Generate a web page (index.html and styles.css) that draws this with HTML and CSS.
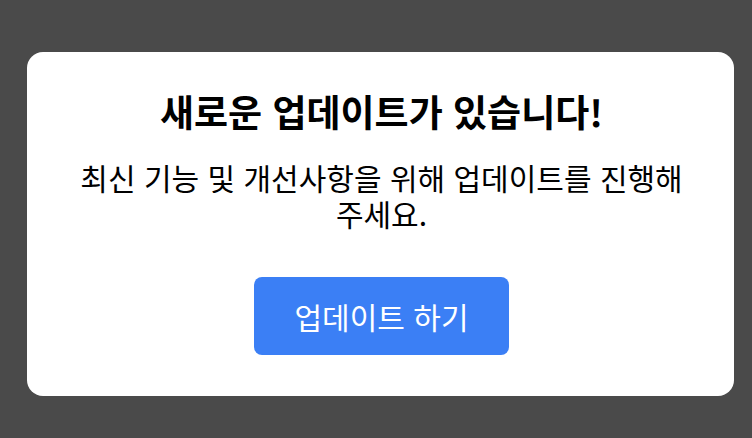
FILE: index.html
```html
<!DOCTYPE html>
<html lang="ko">
<head>
    <meta charset="UTF-8">
    <meta name="viewport" content="width=device-width, initial-scale=1.0">
    <title>업데이트 안내</title>
    <link rel="stylesheet" href="styles.css">
</head>
<body>
    <div class="overlay">
        <div class="dialog">
            <h1 class="dialog-title">새로운 업데이트가 있습니다!</h1>
            <p class="dialog-text">최신 기능 및 개선사항을 위해 업데이트를 진행해 주세요.</p>
            <button class="update-button">업데이트 하기</button>
        </div>
    </div>
</body>
</html>
```

FILE: styles.css
```css
html, body {
    margin: 0;
    padding: 0;
    height: 100%;
}
body {
    background-color: #4a4a4a;
    font-family: "Noto Sans CJK KR", "Noto Sans", sans-serif;
    color: #000;
}
.overlay {
    padding: 52px 18px 0 27px;
}
.dialog {
    background-color: #fff;
    border-radius: 16px;
    height: 344px;
    box-sizing: border-box;
    padding: 34px 38px 0 40px;
    display: flex;
    flex-direction: column;
    align-items: center;
    text-align: center;
}
.dialog-title {
    margin: 0;
    font-size: 37px;
    font-weight: 700;
    line-height: 50px;
}
.dialog-text {
    margin: 23px 0 0;
    max-width: 630px;
    font-size: 30px;
    line-height: 36px;
    word-break: keep-all;
}
.update-button {
    margin-top: 46px;
    width: 255px;
    height: 78px;
    border: none;
    border-radius: 8px;
    background-color: #3b7ff5;
    color: #fff;
    font-family: inherit;
    font-size: 30px;
}
```
